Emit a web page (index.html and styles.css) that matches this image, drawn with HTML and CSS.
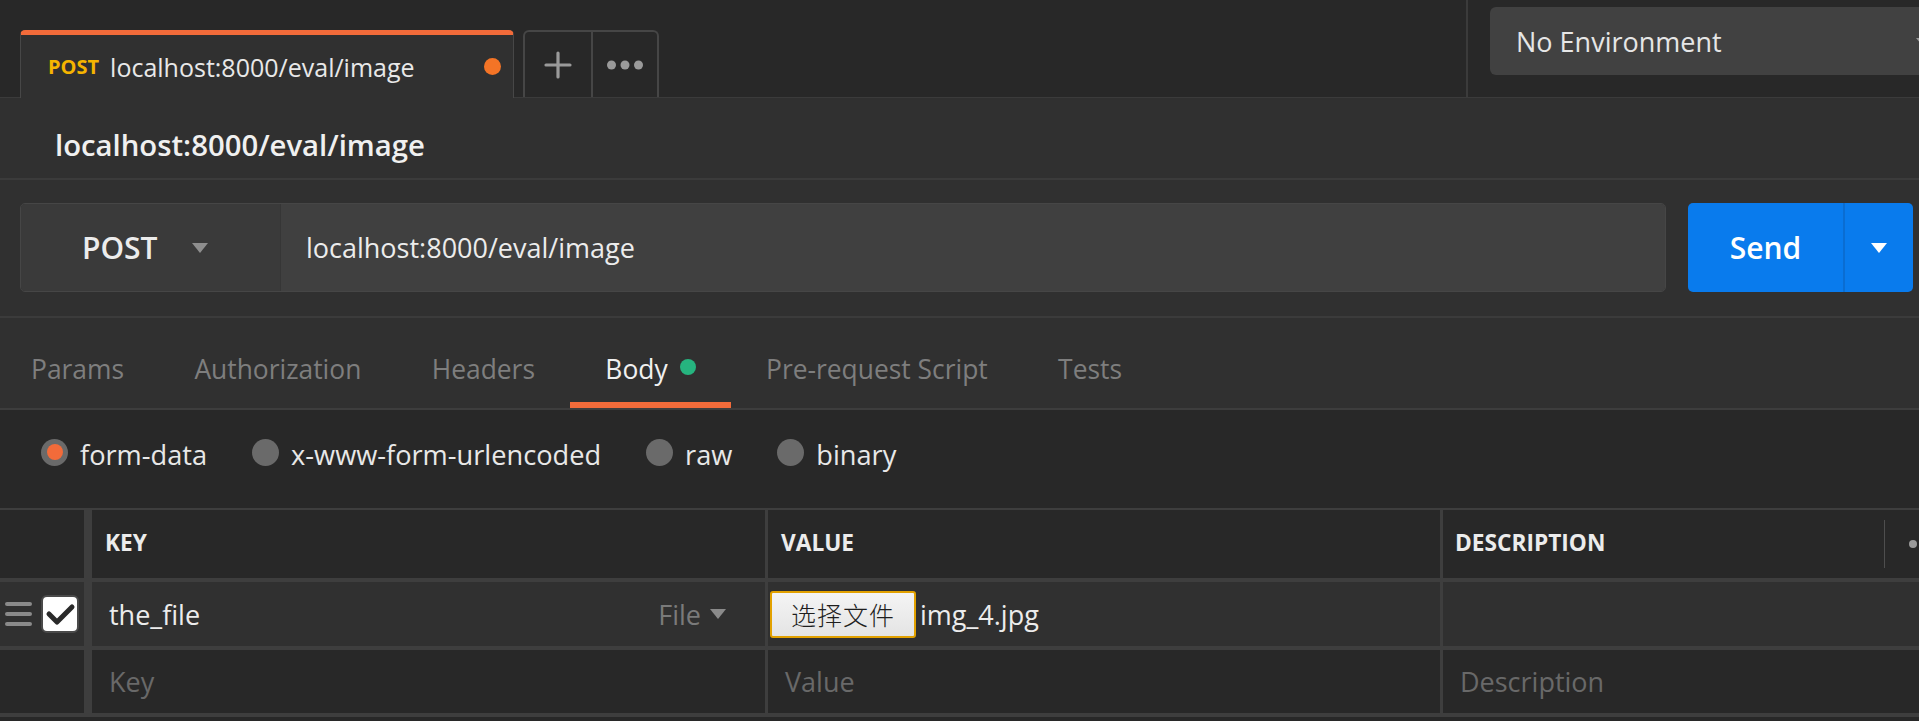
FILE: index.html
```html
<!DOCTYPE html>
<html>
<head>
<meta charset="utf-8">
<link rel="stylesheet" href="styles.css">
</head>
<body>
<div class="app">
  <header class="topbar">
    <div class="tabs">
      <div class="tab">
        <span class="tab-method">POST</span>
        <span class="tab-url">localhost:8000/eval/image</span>
        <span class="tab-dot"></span>
      </div>
      <div class="tab-actions">
        <div class="tab-action">
          <svg width="28" height="28" viewBox="0 0 28 28"><path d="M14 2 V26 M2 14 H26" stroke="#9a9a9a" stroke-width="3.2" stroke-linecap="round" fill="none"/></svg>
        </div>
        <div class="tab-action">
          <svg width="36" height="10" viewBox="0 0 36 10"><circle cx="4.5" cy="5" r="4.5" fill="#9a9a9a"/><circle cx="18" cy="5" r="4.5" fill="#9a9a9a"/><circle cx="31.5" cy="5" r="4.5" fill="#9a9a9a"/></svg>
        </div>
      </div>
    </div>
    <div class="env-wrap">
      <div class="env">
        <span>No Environment</span>
        <span class="env-caret"></span>
      </div>
    </div>
  </header>

  <div class="title-bar">localhost:8000/eval/image</div>

  <div class="request-bar">
    <div class="url-group">
      <div class="method">
        <span>POST</span>
        <span class="caret caret-grey"></span>
      </div>
      <div class="url-input">localhost:8000/eval/image</div>
    </div>
    <div class="send">
      <div class="send-main">Send</div>
      <div class="send-more"><span class="caret caret-white"></span></div>
    </div>
  </div>

  <nav class="req-tabs">
    <div class="req-tab first">Params</div>
    <div class="req-tab">Authorization</div>
    <div class="req-tab">Headers</div>
    <div class="req-tab active">Body<span class="green-dot"></span></div>
    <div class="req-tab">Pre-request Script</div>
    <div class="req-tab">Tests</div>
  </nav>

  <div class="body-types">
    <label class="radio-item"><span class="radio checked"></span>form-data</label>
    <label class="radio-item"><span class="radio"></span>x-www-form-urlencoded</label>
    <label class="radio-item"><span class="radio"></span>raw</label>
    <label class="radio-item"><span class="radio"></span>binary</label>
  </div>

  <div class="kv-table">
    <div class="cell c0 head"></div>
    <div class="cell head pad-h">KEY</div>
    <div class="cell head pad-h">VALUE</div>
    <div class="cell head pad-h desc-head">
      <span class="desc-title">DESCRIPTION</span>
      <span class="head-sep"></span>
      <svg class="head-more" width="40" height="10" viewBox="0 0 40 10"><circle cx="5" cy="5" r="4" fill="#9a9a9a"/><circle cx="18" cy="5" r="4" fill="#9a9a9a"/><circle cx="31" cy="5" r="4" fill="#9a9a9a"/></svg>
    </div>

    <div class="cell c0 row1">
      <span class="drag">
        <i></i><i></i><i></i>
      </span>
      <span class="checkbox">
        <svg width="34" height="34" viewBox="0 0 34 34"><path d="M6 17 L14 25 L29 10" stroke="#2a2a2a" stroke-width="5" fill="none" stroke-linecap="round" stroke-linejoin="round"/></svg>
      </span>
    </div>
    <div class="cell row1 pad key-cell">
      <span>the_file</span>
      <span class="file-type">File<span class="caret caret-small"></span></span>
    </div>
    <div class="cell row1 value-cell">
      <span class="file-btn">选择文件</span>
      <span class="file-name">img_4.jpg</span>
    </div>
    <div class="cell row1"></div>

    <div class="cell c0 row2"></div>
    <div class="cell row2 pad placeholder">Key</div>
    <div class="cell row2 pad placeholder">Value</div>
    <div class="cell row2 pad placeholder desc-ph">Description</div>
  </div>
</div>
</body>
</html>
```

FILE: styles.css
```css
* { box-sizing: border-box; }

html, body {
  margin: 0;
  padding: 0;
  width: 1919px;
  height: 721px;
  overflow: hidden;
  background: #282828;
  font-family: "Open Sans", "Noto Sans", sans-serif;
  color: #e6e6e6;
}

.app {
  width: 1919px;
  background: #303030;
}

/* ---------- top bar ---------- */
.topbar {
  display: flex;
  height: 98px;
  background: #282828;
  border-bottom: 1px solid #3b3b3b;
}

.tabs {
  flex: 1;
  display: flex;
  align-items: flex-end;
  padding-left: 20px;
  gap: 9px;
}

.tab {
  width: 494px;
  height: 68px;
  margin-bottom: -1px;
  background: #303030;
  border-top: 5px solid #f26b3a;
  border-left: 1px solid #474747;
  border-right: 1px solid #474747;
  border-radius: 5px 5px 0 0;
  display: flex;
  align-items: center;
  padding: 0 12px 0 27px;
}

.tab-method {
  font-size: 20px;
  font-weight: 700;
  color: #f5b400;
  margin-right: 11px;
}

.tab-url {
  font-size: 25px;
  color: #e8e8e8;
  flex: 1;
  white-space: nowrap;
}

.tab-dot {
  width: 17px;
  height: 17px;
  border-radius: 50%;
  background: #f47426;
}

.tab-actions {
  display: flex;
  height: 67px;
  border: 2px solid #464646;
  border-bottom: none;
  border-radius: 6px 6px 0 0;
}

.tab-action {
  width: 66px;
  display: flex;
  align-items: center;
  justify-content: center;
}

.tab-action + .tab-action {
  border-left: 2px solid #464646;
}

.env-wrap {
  width: 453px;
  border-left: 2px solid #3b3b3b;
  padding: 7px 0 0 22px;
  overflow: hidden;
}

.env {
  width: 460px;
  height: 68px;
  background: #414141;
  border-radius: 6px;
  display: flex;
  align-items: center;
  padding-left: 26px;
  font-size: 27px;
  color: #e6e6e6;
  position: relative;
}

.env-caret {
  position: absolute;
  left: 426px;
  top: 31px;
  width: 0;
  height: 0;
  border-left: 7px solid transparent;
  border-right: 7px solid transparent;
  border-top: 8px solid #9a9a9a;
}

/* ---------- title ---------- */
.title-bar {
  height: 82px;
  padding: 14px 0 0 55px;
  display: flex;
  align-items: center;
  font-size: 29.3px;
  font-weight: 600;
  color: #f0f0f0;
  border-bottom: 2px solid #3b3b3b;
}

/* ---------- request bar ---------- */
.request-bar {
  display: flex;
  height: 138px;
  padding: 23px 6px 0 20px;
  gap: 22px;
  border-bottom: 2px solid #3b3b3b;
}

.url-group {
  flex: 1;
  height: 89px;
  display: flex;
  border: 1px solid #464646;
  border-radius: 5px;
  overflow: hidden;
}

.method {
  width: 260px;
  background: #3a3a3a;
  border-right: 1px solid #363636;
  display: flex;
  align-items: center;
  padding-left: 61px;
  gap: 34px;
  font-size: 30px;
  font-weight: 600;
  color: #ececec;
}

.url-input {
  flex: 1;
  background: #404040;
  display: flex;
  align-items: center;
  padding-left: 25px;
  font-size: 27px;
  color: #ececec;
}

.caret {
  display: inline-block;
  width: 0;
  height: 0;
  border-left: 8px solid transparent;
  border-right: 8px solid transparent;
  border-top: 10px solid #9a9a9a;
}

.caret-grey { border-top-color: #8e8e8e; }

.caret-white {
  border-left-width: 8px;
  border-right-width: 8px;
  border-top: 10px solid #ffffff;
}

.send {
  width: 225px;
  height: 89px;
  display: flex;
  border-radius: 5px;
  background: #097bed;
  overflow: hidden;
}

.send-main {
  width: 157px;
  display: flex;
  align-items: center;
  justify-content: center;
  font-size: 30px;
  font-weight: 600;
  color: #ffffff;
  border-right: 2px solid #0a6dd2;
}

.send-more {
  flex: 1;
  display: flex;
  align-items: center;
  justify-content: center;
}

/* ---------- request tabs ---------- */
.req-tabs {
  display: flex;
  height: 92px;
  border-bottom: 2px solid #3d3d3d;
}

.req-tab {
  display: flex;
  align-items: center;
  padding: 18px 35.2px 0;
  font-size: 26.4px;
  color: #7e7e7e;
  border-bottom: 6px solid transparent;
}

.req-tab.first { padding-left: 31px; }

.req-tab.active {
  color: #f0f0f0;
  border-bottom-color: #f26b3a;
}

.green-dot {
  width: 16px;
  height: 16px;
  border-radius: 50%;
  background: #26b47f;
  margin-left: 12px;
  margin-top: -4px;
}

/* ---------- body types ---------- */
.body-types {
  height: 98px;
  background: #282828;
  display: flex;
  align-items: center;
  padding: 0 0 10px 41px;
  gap: 45px;
}

.radio-item {
  display: flex;
  align-items: center;
  gap: 12px;
  font-size: 27.2px;
  color: #e8e8e8;
}

.radio {
  width: 27px;
  height: 27px;
  border-radius: 50%;
  background: #6a6a6a;
  display: flex;
  align-items: center;
  justify-content: center;
  margin-top: -4px;
}

.radio.checked::after {
  content: "";
  width: 16px;
  height: 16px;
  border-radius: 50%;
  background: #f26b3a;
}

/* ---------- key/value table ---------- */
.kv-table {
  display: grid;
  grid-template-columns: 89px 673px 672px 1fr;
  grid-template-rows: 68px 64px 63px;
  column-gap: 3px;
  row-gap: 4px;
  background: #3e3e3e;
  border-top: 2px solid #3e3e3e;
  border-bottom: 4px solid #3e3e3e;
}

.cell {
  display: flex;
  align-items: center;
  background: #282828;
  font-size: 27px;
  white-space: nowrap;
  overflow: hidden;
}

.c0 { border-right: 5px solid #3e3e3e; }

.head {
  font-size: 22.7px;
  font-weight: 700;
  color: #ececec;
  padding-bottom: 4px;
}

.pad-h { padding-left: 13px; }
.pad { padding-left: 17px; }

.row1 { background: #303030; color: #ececec; }
.row2 { background: #282828; }

.desc-head { padding-left: 12px; }

.desc-title { width: 429px; flex: none; }

.head-sep {
  width: 1px;
  height: 48px;
  margin-top: 4px;
  background: #4e4e4e;
  flex: none;
}

.head-more {
  flex: none;
  margin-left: 23px;
  margin-top: 4px;
}

.drag {
  display: flex;
  flex-direction: column;
  gap: 6px;
  margin-left: 5px;
}

.drag i {
  display: block;
  width: 27px;
  height: 4px;
  border-radius: 2px;
  background: #8a8a8a;
}

.checkbox {
  width: 38px;
  height: 38px;
  margin-left: 9px;
  border-radius: 6px;
  background: #ffffff;
  border: 2px solid #4a4a4a;
  display: flex;
  align-items: center;
  justify-content: center;
}

.key-cell { justify-content: space-between; padding-right: 39px; }

.file-type {
  display: flex;
  align-items: center;
  gap: 9px;
  color: #7a7a7a;
  font-size: 27px;
}

.caret-small {
  border-left-width: 8px;
  border-right-width: 8px;
  border-top: 10px solid #8a8a8a;
}

.value-cell { padding-left: 2px; }

.file-btn {
  height: 47px;
  width: 146px;
  display: flex;
  align-items: center;
  justify-content: center;
  background: linear-gradient(#f4f4f4, #e4e4e4);
  border: 2px solid #e2a100;
  border-radius: 3px;
  color: #1e1e1e;
  font-family: "Noto Sans CJK SC", sans-serif;
  font-size: 25px;
  font-weight: 300;
  letter-spacing: 1px;
}

.file-name {
  margin-left: 4px;
  color: #ececec;
  font-size: 27px;
}

.placeholder {
  color: #696969;
  font-size: 27px;
}

.desc-ph { padding-left: 17px; }
```
